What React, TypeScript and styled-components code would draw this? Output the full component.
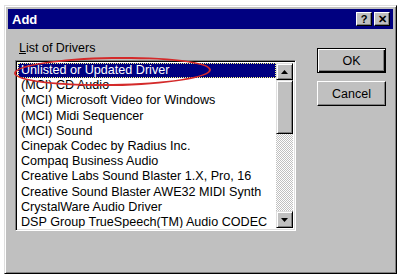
import React from "react";
import styled, { createGlobalStyle } from "styled-components";

const drivers = [
  "Unlisted or Updated Driver",
  "(MCI) CD Audio",
  "(MCI) Microsoft Video for Windows",
  "(MCI) Midi Sequencer",
  "(MCI) Sound",
  "Cinepak Codec by Radius Inc.",
  "Compaq Business Audio",
  "Creative Labs Sound Blaster 1.X, Pro, 16",
  "Creative Sound Blaster AWE32 MIDI Synth",
  "CrystalWare Audio Driver",
  "DSP Group TrueSpeech(TM) Audio CODEC",
];

const GlobalStyle = createGlobalStyle`
  body {
    margin: 0;
    background: #ffffff;
    font-family: "Liberation Sans", Arial, sans-serif;
  }
`;

const Window = styled.div`
  position: relative;
  margin: 5px 0 0 4px;
  width: 393px;
  height: 269px;
  box-sizing: border-box;
  background: #c0c0c0;
  border: 1px solid;
  border-color: #dfdfdf #000000 #000000 #dfdfdf;
  box-shadow: inset 1px 1px 0 #ffffff, inset -1px -1px 0 #808080;
  padding: 3px 3px;
  display: flex;
  flex-direction: column;
`;

const TitleBar = styled.div`
  height: 20px;
  background: #000080;
  display: flex;
  align-items: center;
  padding: 0 3px 0 4px;
`;

const Title = styled.span`
  flex: 1;
  color: #ffffff;
  font-weight: bold;
  font-size: 13px;
`;

const TitleButton = styled.div`
  width: 16px;
  height: 14px;
  box-sizing: border-box;
  background: #c0c0c0;
  border: 1px solid;
  border-color: #ffffff #000000 #000000 #ffffff;
  box-shadow: inset -1px -1px 0 #808080;
  display: flex;
  align-items: center;
  justify-content: center;
  margin-left: 2px;
  font-weight: bold;
  font-size: 11px;
  color: #000000;
  line-height: 1;
`;

const Body = styled.div`
  display: flex;
  padding: 12px 0 0 7px;
`;

const LeftColumn = styled.div`
  width: 281px;
  display: flex;
  flex-direction: column;
`;

const Label = styled.div`
  font-size: 12.5px;
  line-height: 15px;
  padding-left: 4px;
  margin-bottom: 4px;
  color: #000000;

  u {
    text-decoration: underline;
  }
`;

const ListBox = styled.div`
  height: 171px;
  box-sizing: border-box;
  border: 1px solid;
  border-color: #808080 #ffffff #ffffff #808080;
  box-shadow: inset 1px 1px 0 #000000, inset -1px -1px 0 #dfdfdf;
  padding: 2px;
  display: flex;
  background: #ffffff;
`;

const Items = styled.div`
  flex: 1;
  overflow: hidden;
`;

const Item = styled.div<{ $selected?: boolean }>`
  height: 15.2px;
  line-height: 15px;
  font-size: 12.6px;
  padding-left: 3px;
  white-space: nowrap;
  box-sizing: border-box;
  color: ${(p) => (p.$selected ? "#ffffff" : "#000000")};
  background: ${(p) => (p.$selected ? "#000080" : "transparent")};
  outline: ${(p) => (p.$selected ? "1px dotted #ffff80" : "none")};
  outline-offset: -1px;
`;

const ScrollBar = styled.div`
  width: 17px;
  display: flex;
  flex-direction: column;
  background-color: #ffffff;
  background-image: repeating-conic-gradient(#c0c0c0 0 25%, #ffffff 0 50%);
  background-size: 2px 2px;
`;

const ScrollButton = styled.div<{ $tall?: boolean }>`
  height: ${(p) => (p.$tall ? "54px" : "17px")};
  box-sizing: border-box;
  background: #c0c0c0;
  border: 1px solid;
  border-color: #dfdfdf #000000 #000000 #dfdfdf;
  box-shadow: inset 1px 1px 0 #ffffff, inset -1px -1px 0 #808080;
  display: flex;
  align-items: center;
  justify-content: center;
`;

const Track = styled.div`
  flex: 1;
`;

const RightColumn = styled.div`
  margin-left: 21px;
  padding-top: 7px;
  display: flex;
  flex-direction: column;
  gap: 8px;
`;

const Button = styled.div<{ $default?: boolean }>`
  width: 69px;
  height: 25px;
  box-sizing: border-box;
  background: #c0c0c0;
  border: 1px solid #000000;
  border-color: ${(p) =>
    p.$default ? "#000000" : "#ffffff #000000 #000000 #ffffff"};
  box-shadow: ${(p) =>
    p.$default
      ? "inset 1px 1px 0 #ffffff, inset -1px -1px 0 #000000, inset -2px -2px 0 #808080"
      : "inset -1px -1px 0 #808080"};
  display: flex;
  align-items: center;
  justify-content: center;
  font-size: 12.5px;
  color: #000000;
`;

const Annotation = styled.div`
  position: absolute;
  left: 9px;
  top: 51px;
  width: 193px;
  height: 25px;
  border: 2px solid #d42a2a;
  border-radius: 50%;
  transform: rotate(-1deg);
  pointer-events: none;
`;

function Arrow({ up }: { up?: boolean }) {
  return (
    <svg width="7" height="4" viewBox="0 0 7 4">
      <polygon points={up ? "3.5,0 7,4 0,4" : "0,0 7,0 3.5,4"} fill="#000" />
    </svg>
  );
}

export default function App() {
  return (
    <>
      <GlobalStyle />
      <Window>
        <TitleBar>
          <Title>Add</Title>
          <TitleButton>?</TitleButton>
          <TitleButton>✕</TitleButton>
        </TitleBar>
        <Body>
          <LeftColumn>
            <Label>
              <u>L</u>ist of Drivers
            </Label>
            <ListBox>
              <Items>
                {drivers.map((d, i) => (
                  <Item key={d} $selected={i === 0}>
                    {d}
                  </Item>
                ))}
              </Items>
              <ScrollBar>
                <ScrollButton>
                  <Arrow up />
                </ScrollButton>
                <ScrollButton $tall />
                <Track />
                <ScrollButton>
                  <Arrow />
                </ScrollButton>
              </ScrollBar>
            </ListBox>
          </LeftColumn>
          <RightColumn>
            <Button $default>OK</Button>
            <Button>Cancel</Button>
          </RightColumn>
        </Body>
        <Annotation />
      </Window>
    </>
  );
}
